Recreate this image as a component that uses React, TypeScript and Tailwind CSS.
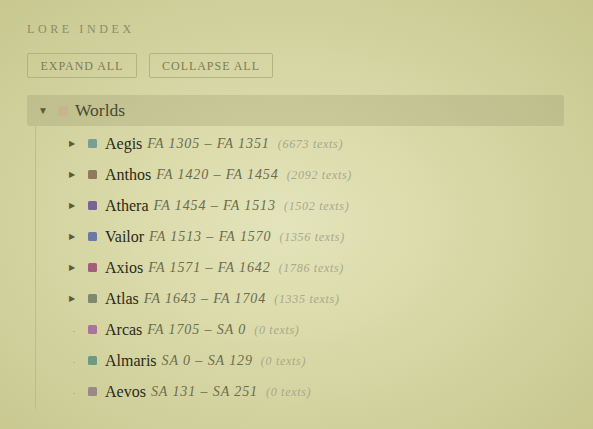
import React from "react";

interface World {
  name: string;
  color: string;
  range: string;
  texts: number;
  expandable: boolean;
}

const worlds: World[] = [
  { name: "Aegis", color: "#7a9e94", range: "FA 1305 – FA 1351", texts: 6673, expandable: true },
  { name: "Anthos", color: "#8f7a5e", range: "FA 1420 – FA 1454", texts: 2092, expandable: true },
  { name: "Athera", color: "#7a6494", range: "FA 1454 – FA 1513", texts: 1502, expandable: true },
  { name: "Vailor", color: "#6a7aa4", range: "FA 1513 – FA 1570", texts: 1356, expandable: true },
  { name: "Axios", color: "#a0607a", range: "FA 1571 – FA 1642", texts: 1786, expandable: true },
  { name: "Atlas", color: "#7e8a6e", range: "FA 1643 – FA 1704", texts: 1335, expandable: true },
  { name: "Arcas", color: "#a8749a", range: "FA 1705 – SA 0", texts: 0, expandable: false },
  { name: "Almaris", color: "#6e9a84", range: "SA 0 – SA 129", texts: 0, expandable: false },
  { name: "Aevos", color: "#9a8a84", range: "SA 131 – SA 251", texts: 0, expandable: false },
];

export default function App() {
  return (
    <div
      className="h-[429px] w-full overflow-hidden bg-[radial-gradient(ellipse_at_48%_52%,#e4e4bc_0%,#d9d9a8_40%,#c7c68e_100%)] px-[27px] pt-[22px]"
      style={{ fontFamily: '"Liberation Serif", "DejaVu Serif", serif' }}
    >
      <div className="text-[12px] leading-[14px] tracking-[0.3em] text-[#8c8c66]">LORE INDEX</div>

      <div className="mt-[17px] flex gap-[12px]">
        <button className="h-[25px] w-[110px] rounded-[2px] border border-[#b3b382] pt-[1px] text-[12px] tracking-[0.08em] text-[#7c7c56]">
          EXPAND ALL
        </button>
        <button className="h-[25px] w-[124px] rounded-[2px] border border-[#b3b382] pt-[1px] text-[12px] tracking-[0.08em] text-[#7c7c56]">
          COLLAPSE ALL
        </button>
      </div>

      <div className="mt-[17px] w-[537px]">
        <div className="flex h-[31px] items-center rounded-[3px] bg-[rgba(130,130,90,0.22)] pl-[11px]">
          <span className="w-[20px] text-[10px] text-[#5c5c3c]">▼</span>
          <span className="h-[10px] w-[10px] rounded-[2px] bg-[#c9b28c] opacity-80" />
          <span className="ml-[7px] text-[17.5px] text-[#4a4a2e]">Worlds</span>
        </div>

        <div className="ml-[8px] border-l border-[#bcbc8c] pt-[2px] pb-[2px]">
          {worlds.map((w) => (
            <div key={w.name} className="flex h-[31px] items-center pl-[33px]">
              <span className="w-[19px] text-[8px] text-[#5c5c3c]">
                {w.expandable ? "▶" : <span className="ml-[4px] inline-block h-[1px] w-[2px] bg-[#b8b890]" />}
              </span>
              <span className="h-[9px] w-[9px] rounded-[1.5px]" style={{ backgroundColor: w.color }} />
              <span className="ml-[8px] text-[16px] text-[#2a2a18]">{w.name}</span>
              <span className="ml-[5px] text-[14px] italic tracking-[0.9px] text-[#6c6c4e]">{w.range}</span>
              <span className="ml-[8px] text-[12px] italic tracking-[0.7px] text-[#a8a88a]">({w.texts} texts)</span>
            </div>
          ))}
        </div>
      </div>
    </div>
  );
}
